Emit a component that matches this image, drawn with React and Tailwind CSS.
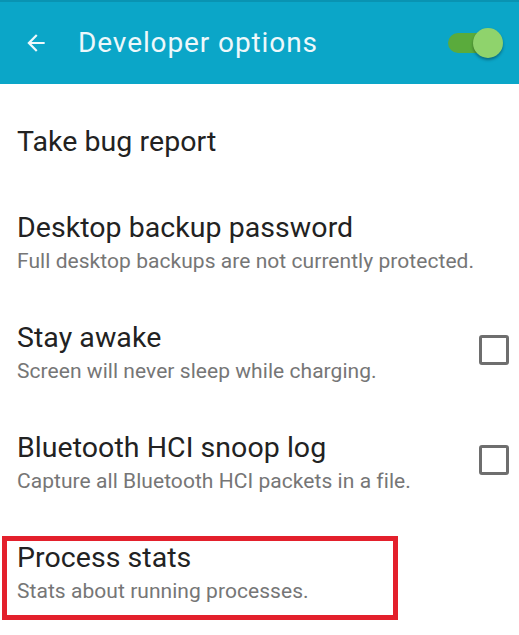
import React from "react";

const rows = [
  { title: "Desktop backup password", sub: "Full desktop backups are not currently protected." },
  { title: "Stay awake", sub: "Screen will never sleep while charging.", check: true },
  { title: "Bluetooth HCI snoop log", sub: "Capture all Bluetooth HCI packets in a file.", check: true },
  { title: "Process stats", sub: "Stats about running processes.", marked: true },
];

const Row = ({ title, sub, check, marked }) => (
  <div className="relative flex h-[110px] items-center justify-between pl-[17px] pr-[10px]">
    <div className="mt-[7px] flex flex-col">
      <span className="text-[28.5px] leading-[34px] tracking-[0.05px] text-[#222222]">{title}</span>
      <span className="text-[21px] leading-[32px] tracking-[0.05px] text-[#767676]">{sub}</span>
    </div>
    {check && <div className="h-[30px] w-[30px] rounded-[3px] border-[3px] border-[#6e6e6e]" />}
    {/* annotation box */}
    {marked && (
      <div className="absolute left-[2px] top-[21px] h-[84px] w-[396px] border-[5px] border-[#e3202c]" />
    )}
  </div>
);

const App = () => {
  return (
    <div className="h-[635px] w-[519px] overflow-hidden bg-white" style={{ fontFamily: "Roboto, 'Noto Sans', sans-serif" }}>
      {/* ---------- app bar ---------- */}
      <div className="flex h-[84px] items-center border-t-[2px] border-[#0993b2] bg-[#0ba6c8]">
        <svg viewBox="0 0 24 24" className="ml-[23px] h-[26px] w-[26px]" fill="#eef8fb">
          <path d="M20 11H7.83l5.59-5.59L12 4l-8 8 8 8 1.41-1.41L7.83 13H20v-2z" />
        </svg>
        <span className="ml-[29px] text-[28px] tracking-[0.9px] text-[#eef8fb]">Developer options</span>
        <div className="relative ml-auto mr-[16px] flex h-[30px] w-[55px] items-center">
          <div className="h-[20px] w-[46px] rounded-full bg-[#5aab3c]" />
          <div className="absolute right-0 top-0 h-[30px] w-[30px] rounded-full bg-[#8fd36c] shadow-[0_2px_3px_rgba(0,0,0,0.35)]" />
        </div>
      </div>

      {/* ---------- list ---------- */}
      <div className="flex h-[101px] items-center pl-[17px] pt-[14px]">
        <span className="text-[28.5px] leading-[34px] tracking-[0.05px] text-[#222222]">Take bug report</span>
      </div>
      {rows.map((r) => (
        <Row key={r.title} {...r} />
      ))}
    </div>
  );
};

export default App;
